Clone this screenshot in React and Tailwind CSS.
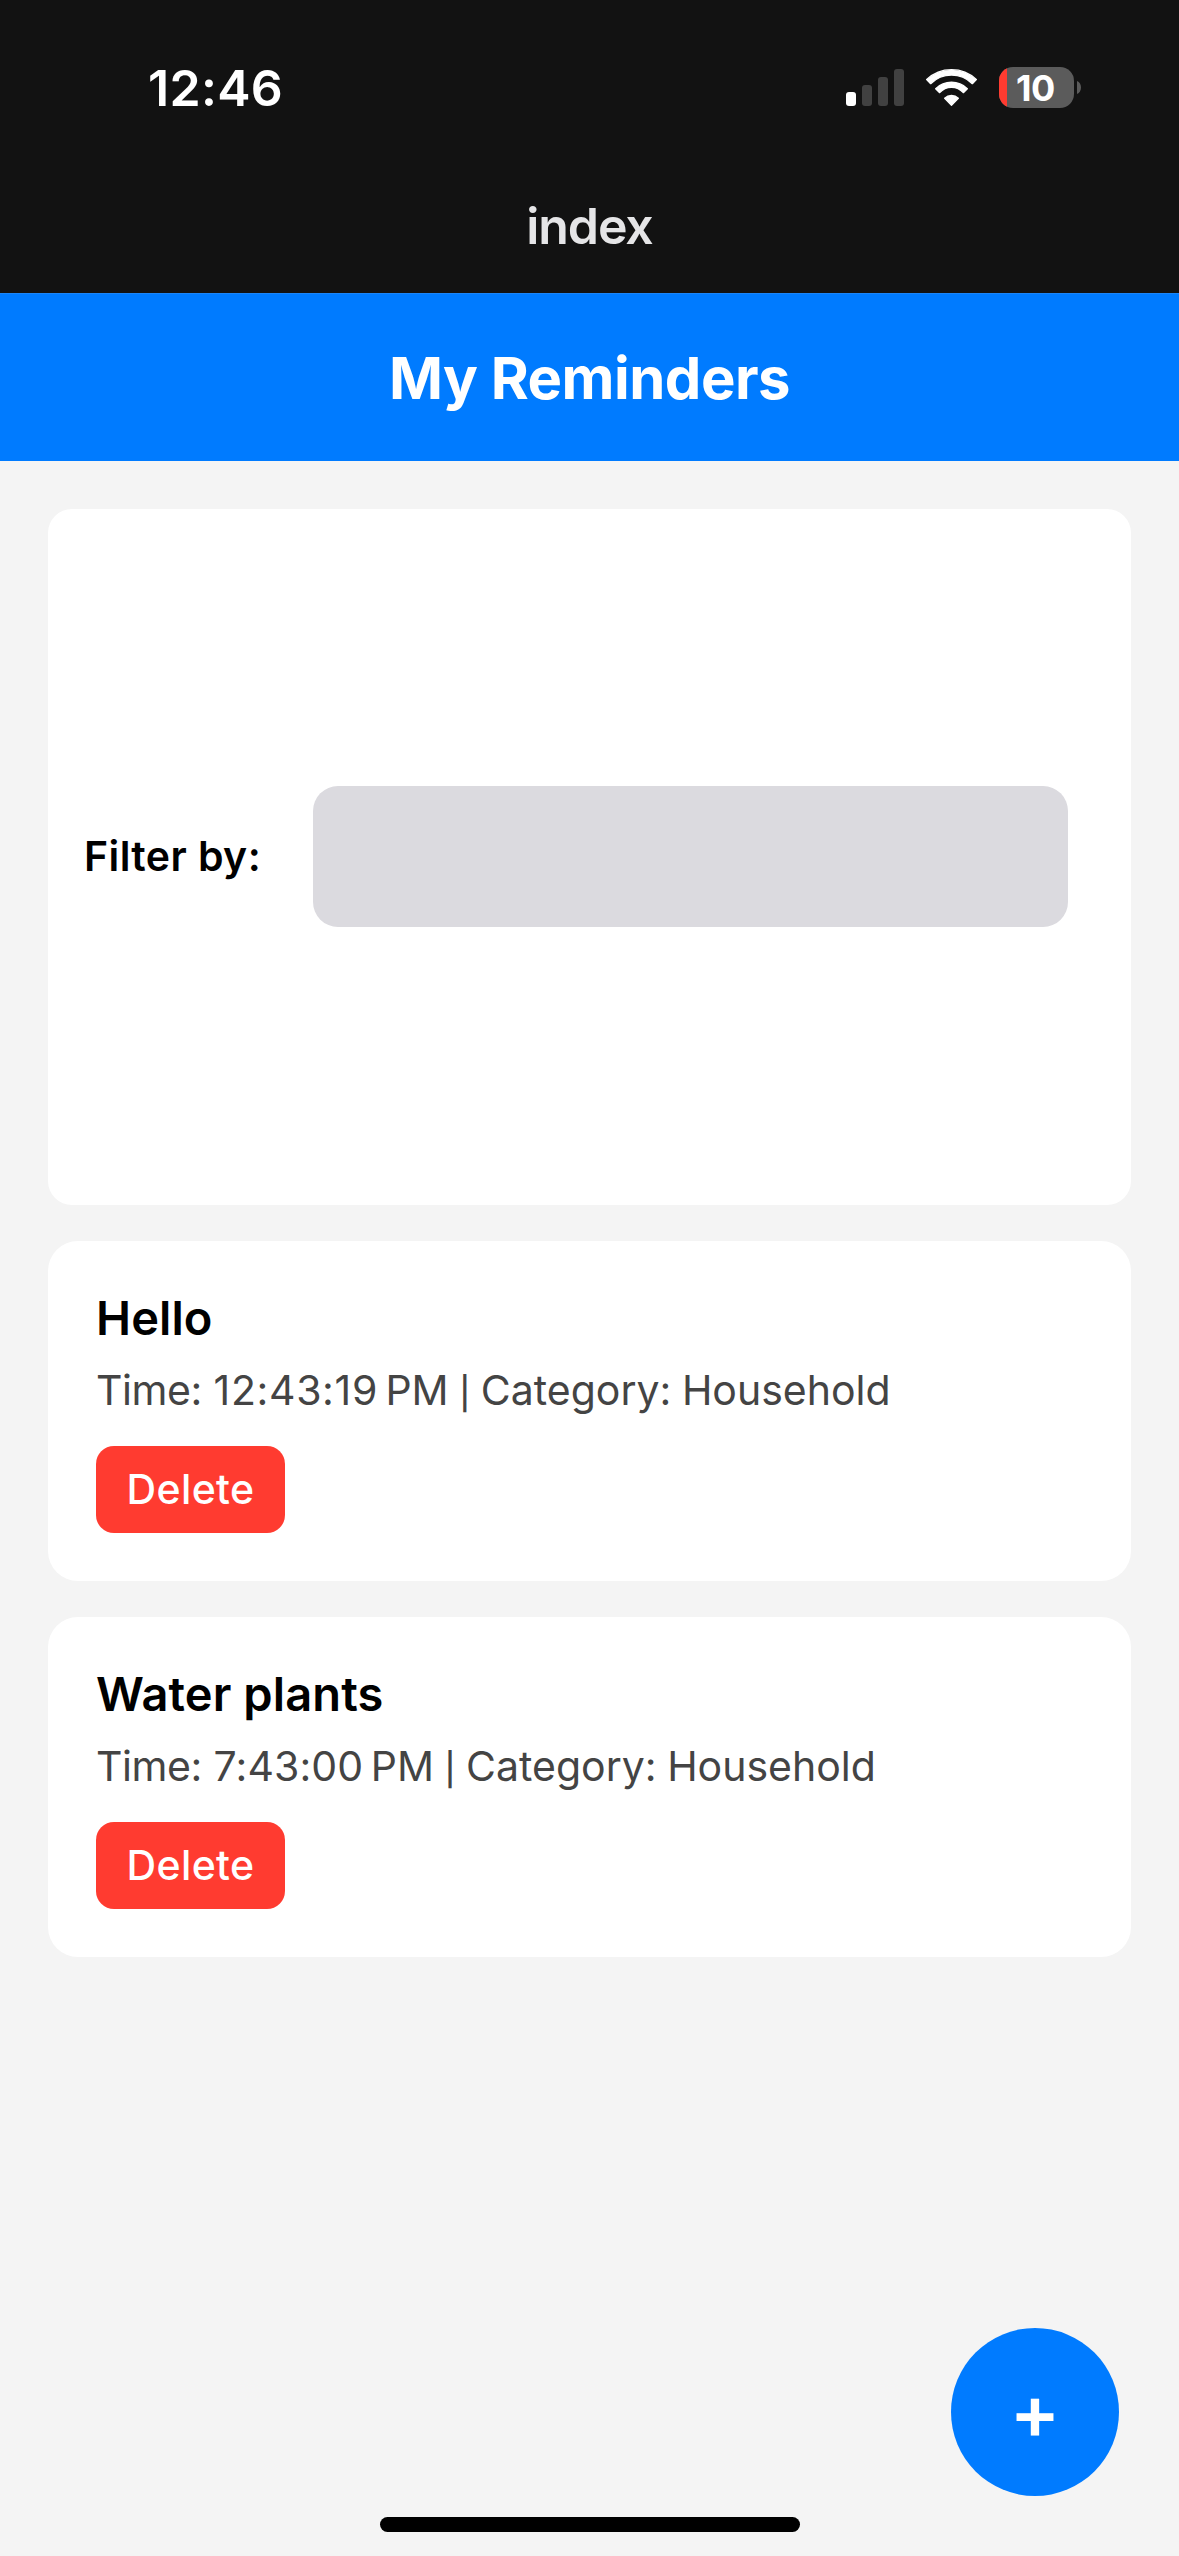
import React from "react";

const reminders = [
  { title: "Hello", time: "12:43:19", timeClass: "tracking-[0.65px]", category: "Household" },
  { title: "Water plants", time: "7:43:00", timeClass: "tracking-[0.1px]", category: "Household" },
];

function Signal() {
  return (
    <div className="flex h-[37px] items-end gap-[6px]">
      <span className="h-[14px] w-[10px] rounded-[3px] bg-white" />
      <span className="h-[21px] w-[10px] rounded-[3px] bg-[#414141]" />
      <span className="h-[29px] w-[10px] rounded-[3px] bg-[#414141]" />
      <span className="h-[37px] w-[10px] rounded-[3px] bg-[#414141]" />
    </div>
  );
}

function Wifi() {
  return (
    <svg
      className="ml-[22px] h-[37px] w-[51px]"
      viewBox="318 87 153 111"
      fill="#fff"
      stroke="#fff"
      strokeWidth="4"
      strokeLinejoin="round"
    >
      <path d="M320 118.5A109 109 0 0 1 469 118.5L457 131A89 89 0 0 0 332 131Z" />
      <path d="M347 146A68 68 0 0 1 442 146L430 158A47 47 0 0 0 359 158Z" />
      <path d="M374 175A29 29 0 0 1 415 175L394.5 196Z" />
    </svg>
  );
}

function Battery() {
  return (
    <div className="ml-[22px] flex items-center">
      <div className="relative flex h-[41px] w-[75px] items-center overflow-hidden rounded-[14px] bg-[#5b5b5b]">
        <span className="h-full w-[8px] bg-[#ff3b30]" />
        <span className="pl-[9px] text-[36px] leading-[42px] font-bold tracking-[-0.5px] text-white">
          10
        </span>
      </div>
      <svg className="ml-[3px] h-[13px] w-[4px]" viewBox="0 0 4 13" fill="#5b5b5b">
        <path d="M0 0C2.6 1.2 4 3.6 4 6.5S2.6 11.8 0 13Z" />
      </svg>
    </div>
  );
}

function ReminderCard({ title, time, timeClass, category }) {
  return (
    <li className="flex h-[340px] flex-col items-start rounded-[30px] bg-white p-[48px]">
      <h2 className="text-[47px] leading-[58px] font-semibold tracking-[0.1px] text-black">
        {title}
      </h2>
      <p className="mt-[18px] h-[50px] text-[41px] leading-[51px] whitespace-nowrap text-[#444]">
        <span className="tracking-[-0.4px]">Time:</span>{" "}
        <span className={timeClass}>{time}</span>
        <span className="[word-spacing:-1px]">
          {"\u202f"}PM <span className="text-[32px] leading-none font-medium">|</span> Category: {category}
        </span>
      </p>
      <button className="mt-[31px] h-[87px] w-[189px] rounded-[18px] bg-[#ff3b30] pb-px text-[41px] leading-[51px] font-medium tracking-[0.4px] text-white">
        Delete
      </button>
    </li>
  );
}

export default function App() {
  return (
    <div className="relative flex h-[2556px] w-[1179px] flex-col overflow-hidden bg-[#f4f4f4] font-['Inter',sans-serif]">
      <header className="h-[293px] shrink-0 bg-[#121212]">
        <div className="flex h-[175px] items-center justify-between pr-[98px] pl-[148px]">
          <span className="text-[50px] leading-[60px] font-semibold tracking-[0.3px] text-white">
            12:46
          </span>
          <div className="flex items-center">
            <Signal />
            <Wifi />
            <Battery />
          </div>
        </div>
        <div className="flex h-[102px] items-center justify-center text-[50px] leading-[60px] font-semibold tracking-[-1.1px] text-[#e5e5e7]">
          index
        </div>
      </header>

      <div className="flex h-[168px] shrink-0 items-center justify-center border-t border-[#1a86f9] bg-[#007bff]">
        <h1 className="text-[58px] leading-[72px] font-bold tracking-[-0.5px] text-white">
          My Reminders
        </h1>
      </div>

      <main className="flex flex-col gap-[36px] p-[48px]">
        <section className="flex h-[696px] items-center rounded-[24px] bg-white px-[36px] pb-px">
          <span className="w-[177px] shrink-0 text-[41px] leading-[51px] font-semibold tracking-[0.4px] whitespace-nowrap text-black">
            Filter by:
          </span>
          <div className="mr-[27px] ml-[52px] h-[141px] flex-1 rounded-[25px] bg-[#dbdadf]" />
        </section>
        <ul className="flex flex-col gap-[36px]">
          {reminders.map((r) => (
            <ReminderCard key={r.title} {...r} />
          ))}
        </ul>
      </main>

      <button className="absolute right-[60px] bottom-[60px] flex h-[168px] w-[168px] items-center justify-center rounded-full bg-[#007bff] text-[75px] leading-[84px] font-semibold text-white">
        +
      </button>
      <div className="absolute bottom-[24px] left-[380px] h-[15px] w-[420px] rounded-full bg-black" />
    </div>
  );
}
